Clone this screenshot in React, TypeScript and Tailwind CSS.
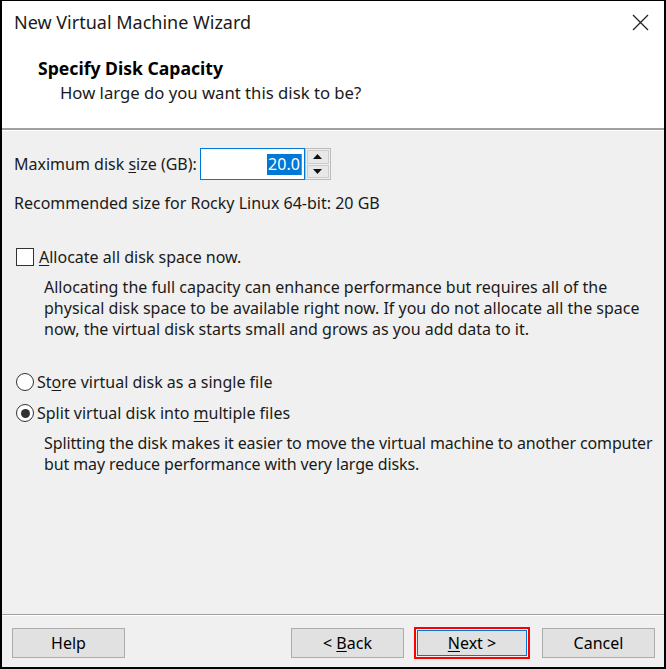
import React from 'react'

const font = { fontFamily: '"Noto Sans", "Open Sans", sans-serif' }

const U = ({ children }: { children: React.ReactNode }) => (
  <span className="underline underline-offset-2">{children}</span>
)

const WinButton = ({ children, focused }: { children: React.ReactNode; focused?: boolean }) => {
  if (focused) {
    return (
      <div className="border-2 border-[#ff0000] p-px">
        <div className="w-[110px] h-[26px] bg-[#e1e1e1] border border-[#0078d7] flex items-center justify-center text-[16px] text-black">
          <span className="whitespace-pre">{children}</span>
        </div>
      </div>
    )
  }
  return (
    <div className="w-[113px] h-[30px] bg-[#e1e1e1] border border-[#adadad] flex items-center justify-center text-[16px] text-black">
      <span className="whitespace-pre">{children}</span>
    </div>
  )
}

const Radio = ({ checked }: { checked?: boolean }) => (
  <div className="w-[18px] h-[18px] rounded-full border border-[#333] bg-white flex items-center justify-center">
    {checked && <div className="w-[9px] h-[9px] rounded-full bg-[#333]" />}
  </div>
)

export default function App() {
  return (
    <div
      className="w-[666px] h-[669px] bg-[#f0f0f0] border-x-2 border-t border-b-2 border-black flex flex-col text-[#1a1a1a]"
      style={font}
    >
      {/* title bar */}
      <div className="h-[43px] bg-white flex items-center justify-between pl-[12px] pr-[15px]">
        <span className="text-[18px] text-[#1a1a1a]">New Virtual Machine Wizard</span>
        <svg width="17" height="17" viewBox="0 0 17 17">
          <path d="M1 1 L16 16 M16 1 L1 16" stroke="#222" strokeWidth="1.3" />
        </svg>
      </div>

      {/* header */}
      <div className="h-[84px] bg-white pl-[36px] pt-[12px]">
        <div className="text-[17.6px] font-bold text-black leading-[25px]">Specify Disk Capacity</div>
        <div className="text-[16.7px] pl-[22px] leading-[24px]">How large do you want this disk to be?</div>
      </div>
      <div className="h-[3px] border-t-2 border-[#a0a0a0] bg-white" />

      {/* body */}
      <div className="flex-1 px-[12px] pt-[17px] text-[16px] leading-[22px]">
        <div className="flex items-center gap-[3px]">
          <span>
            Maximum disk <U>s</U>ize (GB):
          </span>
          <div className="flex">
            <div className="w-[105px] h-[32px] bg-white border border-[#0078d7] flex items-center justify-end pr-[2px]">
              <span className="bg-[#0078d7] text-white leading-[21px] px-px">20.0</span>
              <span className="w-px h-[21px] bg-[#e07020]" />
            </div>
            <div className="w-[26px] h-[32px] flex flex-col border border-[#bbb] bg-[#f0f0f0] p-px gap-px">
              <div className="flex-1 bg-[#e8e8e8] border border-[#ccc] flex items-center justify-center">
                <svg width="9" height="5" viewBox="0 0 9 5">
                  <path d="M0 5 L4.5 0 L9 5 Z" fill="#111" />
                </svg>
              </div>
              <div className="flex-1 bg-[#e8e8e8] border border-[#ccc] flex items-center justify-center">
                <svg width="9" height="5" viewBox="0 0 9 5">
                  <path d="M0 0 L9 0 L4.5 5 Z" fill="#111" />
                </svg>
              </div>
            </div>
          </div>
        </div>

        <div className="mt-[12px]">Recommended size for Rocky Linux 64-bit: 20 GB</div>

        <div className="mt-[32px] flex items-center gap-[5px] pl-[2px]">
          <div className="w-[18px] h-[18px] border border-[#333] bg-white" />
          <span>
            <U>A</U>llocate all disk space now.
          </span>
        </div>

        <div className="pl-[30px] mt-[9px] leading-[21px] whitespace-nowrap">
          Allocating the full capacity can enhance performance but requires all of the
          <br />
          physical disk space to be available right now. If you do not allocate all the space
          <br />
          now, the virtual disk starts small and grows as you add data to it.
        </div>

        <div className="mt-[31px] flex items-center gap-[3px] pl-[2px]">
          <Radio />
          <span>
            St<U>o</U>re virtual disk as a single file
          </span>
        </div>
        <div className="mt-[9px] flex items-center gap-[3px] pl-[2px]">
          <Radio checked />
          <span>
            Split virtual disk into <U>m</U>ultiple files
          </span>
        </div>
        <div className="pl-[30px] mt-[9px] leading-[21px] whitespace-nowrap tracking-[-0.12px]">
          Splitting the disk makes it easier to move the virtual machine to another computer
          <br />
          but may reduce performance with very large disks.
        </div>
      </div>

      {/* footer */}
      <div className="h-[2px] border-t border-[#a0a0a0] bg-white" />
      <div className="h-[51px] flex items-center pl-[10px] pr-[9px] pt-[2px]">
        <WinButton>Help</WinButton>
        <div className="flex-1" />
        <WinButton>
          {'< '}
          <U>B</U>ack
        </WinButton>
        <div className="w-[10px]" />
        <WinButton focused>
          <U>N</U>ext &gt;
        </WinButton>
        <div className="w-[12px]" />
        <WinButton>Cancel</WinButton>
      </div>
    </div>
  )
}
